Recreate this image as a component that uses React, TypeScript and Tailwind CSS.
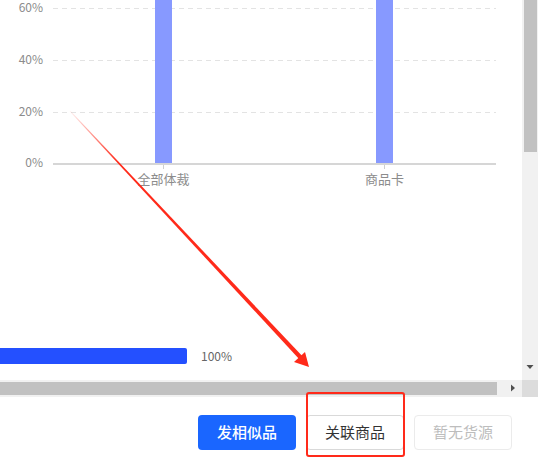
import React from 'react';

const gridRows = [
  { y: 8, label: '60%' },
  { y: 60, label: '40%' },
  { y: 112, label: '20%' },
];

const bars = [
  { x: 155, center: 163.5, label: '全部体裁' },
  { x: 376, center: 384.5, label: '商品卡' },
];

function Chart() {
  return (
    <svg width="522" height="200" className="block shrink-0">
      {gridRows.map((row) => (
        <g key={row.label}>
          <line
            x1="53"
            x2="496"
            y1={row.y + 0.5}
            y2={row.y + 0.5}
            stroke="#e3e3e3"
            strokeWidth="1"
            strokeDasharray="5 4"
          />
          <text
            x="43"
            y={row.y + 0.5}
            textAnchor="end"
            dominantBaseline="middle"
            fontSize="12"
            fill="#8c8c8c"
          >
            {row.label}
          </text>
        </g>
      ))}
      <text x="43" y="164" textAnchor="end" dominantBaseline="middle" fontSize="12" fill="#8c8c8c">
        0%
      </text>
      {bars.map((bar) => (
        <g key={bar.label}>
          <rect x={bar.x} y="0" width="17" height="164" fill="#8799ff" />
          <line x1={bar.center} x2={bar.center} y1="164" y2="169" stroke="#cfcfcf" strokeWidth="1" />
          <text
            x={bar.center}
            y="180"
            textAnchor="middle"
            dominantBaseline="middle"
            fontSize="13"
            fill="#8c8c8c"
          >
            {bar.label}
          </text>
        </g>
      ))}
      <line x1="53" x2="496" y1="164" y2="164" stroke="#d6d6d6" strokeWidth="2" />
    </svg>
  );
}

export default function App() {
  return (
    <div className="relative w-[538px] h-[461px] bg-white overflow-hidden font-['Noto_Sans_CJK_SC',sans-serif]">
      <div className="flex h-[380px]">
        <div className="flex-1 flex flex-col">
          <Chart />
          <div className="mt-[148px] flex items-center h-4">
            <div className="w-[187px] h-4 bg-[#2450ff] rounded-r-[2px]"></div>
            <span className="ml-[14px] text-xs text-[#666]">100%</span>
          </div>
        </div>
        <div className="w-4 bg-[#f1f1f1] flex flex-col">
          <div className="ml-[2px] w-[13px] h-[152px] bg-[#c1c1c1]"></div>
          <div className="flex-1"></div>
          <svg width="16" height="20" className="block mb-[3px]">
            <polygon points="4.5,8 11.5,8 8,12" fill="#505050" />
          </svg>
        </div>
      </div>
      <div className="flex h-[17px]">
        <div className="flex-1 bg-[#f1f1f1] flex items-center">
          <div className="w-[497px] h-[13px] bg-[#c1c1c1]"></div>
          <svg width="25" height="17" className="block">
            <polygon points="14,4.5 14,11.5 18,8" fill="#505050" />
          </svg>
        </div>
        <div className="w-4 bg-[#dcdcdc]"></div>
      </div>
      <div className="h-[64px] flex justify-end items-start pt-[18px] pr-[26px] gap-[10px]">
        <button className="w-[98px] h-[35px] rounded-[4px] bg-[#1a66ff] text-white text-[15px] font-medium">
          发相似品
        </button>
        <button className="w-[98px] h-[35px] rounded-[4px] bg-white border border-[#d9d9d9] text-[#333] text-[15px]">
          关联商品
        </button>
        <button className="w-[98px] h-[35px] rounded-[4px] bg-white border border-[#ebebeb] text-[#bdbdbd] text-[15px]">
          暂无货源
        </button>
      </div>

      {/* annotation overlay */}
      <svg width="538" height="461" className="absolute top-0 left-0 pointer-events-none">
        <defs>
          <linearGradient id="arrowFade" gradientUnits="userSpaceOnUse" x1="70" y1="111" x2="308" y2="366">
            <stop offset="0" stopColor="#ff2a1a" stopOpacity="0.05" />
            <stop offset="0.2" stopColor="#ff2a1a" stopOpacity="1" />
            <stop offset="1" stopColor="#ff2a1a" stopOpacity="1" />
          </linearGradient>
        </defs>
        <polygon
          points="69.6,111.3 70.4,110.7 304.6,358.5 301.4,361.5"
          fill="url(#arrowFade)"
        />
        <polygon points="309,367 294,362 305,352" fill="#ff2a1a" />
      </svg>
      <div className="absolute left-[306px] top-[392px] w-[99px] h-[65px] border-2 border-[#ff2a1a] rounded-[3px] pointer-events-none"></div>
    </div>
  );
}
